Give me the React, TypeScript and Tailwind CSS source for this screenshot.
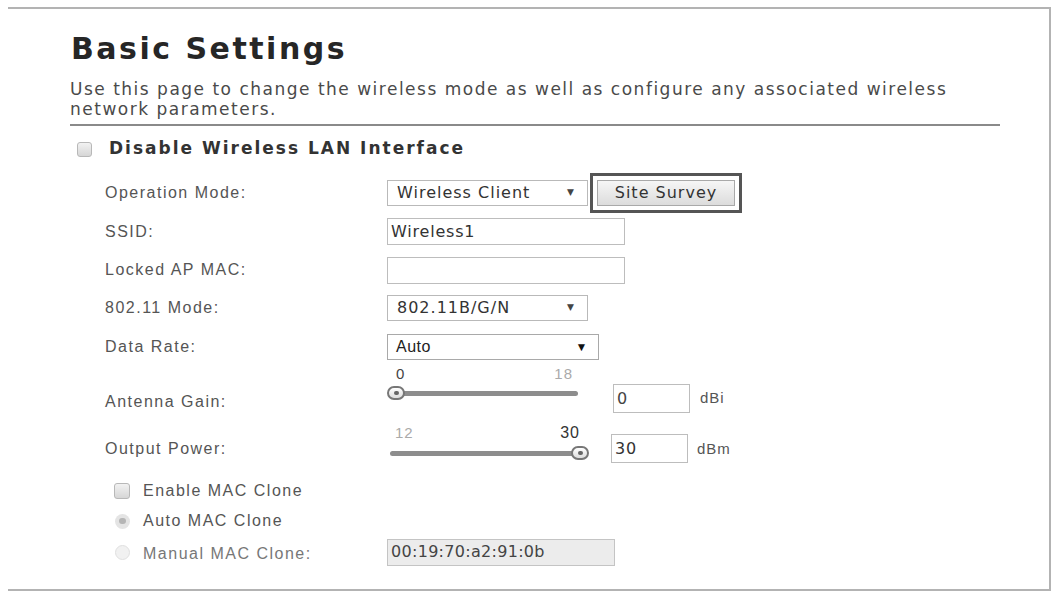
import React from 'react';

const sans = { fontFamily: '"DejaVu Sans", Verdana, sans-serif' };
const arial = { fontFamily: '"Liberation Sans", Arial, sans-serif' };

function Label({ children }: { children: React.ReactNode }) {
  return (
    <div className="w-[282px] shrink-0 text-[16px] leading-[20px] tracking-[1.5px] text-[#555]" style={arial}>
      {children}
    </div>
  );
}

function Select({ value, width }: { value: string; width: string }) {
  return (
    <div
      className={`${width} h-[26px] flex items-center justify-between border border-[#b9b9b9] bg-white pl-[9px] pr-[12px] text-[16px] tracking-[1px] text-[#333]`}
      style={sans}
    >
      <span>{value}</span>
      <span className="text-[9px] text-[#444]">▼</span>
    </div>
  );
}

function TextBox({ value = '', className = '' }: { value?: string; className?: string }) {
  return (
    <div
      className={`h-[27px] flex items-center border border-[#bdbdbd] bg-white pl-[3px] text-[16px] tracking-[0.8px] text-[#333] ${className}`}
      style={sans}
    >
      {value}
    </div>
  );
}

function Thumb() {
  return (
    <div className="w-[18px] h-[14px] rounded-full border-2 border-[#777] bg-gradient-to-b from-white to-[#ddd] flex items-center justify-center">
      <div className="w-[5px] h-[4px] rounded-full bg-[#666]" />
    </div>
  );
}

function Checkbox({ className = '' }: { className?: string }) {
  return (
    <div className={`w-[15px] h-[15px] rounded-[3px] border border-[#b8b8b8] bg-gradient-to-b from-[#f2f2f2] to-[#d6d6d6] ${className}`} />
  );
}

export default function App() {
  return (
    <div className="w-[1054px] h-[595px] bg-white overflow-hidden">
      <div className="mt-[7px] ml-[8px] w-[1043px] h-[584px] border-t-2 border-r-2 border-b-2 border-[#b3b3b3] pl-[62px] pt-[25px]">
        <h1 className="ml-[1px] text-[30px] leading-[30px] font-bold tracking-[2.5px] text-[#262626]" style={sans}>
          Basic Settings
        </h1>
        <p className="mt-[15px] text-[17px] leading-[20px] tracking-[1.5px] text-[#4a4a4a] whitespace-nowrap" style={sans}>
          Use this page to change the wireless mode as well as configure any associated wireless
          <br />
          network parameters.
        </p>
        <div className="mt-[5px] w-[930px] h-[2px] bg-[#8a8a8a]" />

        <div className="mt-[13px] ml-[7px] h-[20px] flex items-center">
          <Checkbox />
          <span className="ml-[17px] text-[17px] font-bold tracking-[2px] text-[#333]" style={sans}>
            Disable Wireless LAN Interface
          </span>
        </div>

        <div className="mt-[15px] pl-[35px]">
          <div className="h-[38px] flex items-center">
            <Label>Operation Mode:</Label>
            <Select value="Wireless Client" width="w-[201px]" />
            <div className="ml-[2px] w-[152px] h-[40px] border-[3px] border-[#555] flex items-center justify-center">
              <div
                className="w-[138px] h-[26px] border border-[#a9a9a9] bg-gradient-to-b from-[#f6f6f6] to-[#dcdcdc] flex items-center justify-center text-[16px] tracking-[1px] text-[#333]"
                style={sans}
              >
                Site Survey
              </div>
            </div>
          </div>
          <div className="h-[39px] flex items-center">
            <Label>SSID:</Label>
            <TextBox value="Wireless1" className="w-[238px]" />
          </div>
          <div className="h-[38px] flex items-center">
            <Label>Locked AP MAC:</Label>
            <TextBox className="w-[238px]" />
          </div>
          <div className="h-[38px] flex items-center">
            <Label>802.11 Mode:</Label>
            <Select value="802.11B/G/N" width="w-[201px]" />
          </div>
          <div className="h-[39px] flex items-center">
            <Label>Data Rate:</Label>
            <div
              className="w-[212px] h-[26px] flex items-center justify-between border border-[#a9a9a9] bg-white pl-[8px] pr-[10px] text-[16px] tracking-[0.5px] text-[#222]"
              style={arial}
            >
              <span>Auto</span>
              <span className="text-[12px] text-[#111]">▼</span>
            </div>
          </div>

          {/* Antenna gain */}
          <div className="h-[59px] flex items-start">
            <div className="mt-[26px]">
              <Label>Antenna Gain:</Label>
            </div>
            <div className="w-[205px]">
              <div className="h-[16px] flex justify-between pl-[9px] pr-[19px] text-[15px] leading-[16px] tracking-[1px]" style={arial}>
                <span className="text-[#444]">0</span>
                <span className="text-[#aaa]">18</span>
              </div>
              <div className="relative mt-[3px] h-[16px] w-[192px] flex items-center">
                <div className="ml-[1px] w-[190px] h-[5px] rounded-full bg-[#8d8d8d]" />
                <div className="absolute left-[0px] top-[1px]">
                  <Thumb />
                </div>
              </div>
            </div>
            <TextBox value="0" className="mt-[18px] ml-[21px] w-[77px] h-[29px] text-[#444]" />
            <span className="mt-[22px] ml-[10px] text-[15px] leading-[20px] tracking-[1px] text-[#555]" style={arial}>
              dBi
            </span>
          </div>

          {/* Output power */}
          <div className="h-[45px] flex items-start">
            <div className="mt-[14px]">
              <Label>Output Power:</Label>
            </div>
            <div className="w-[203px]">
              <div className="h-[16px] flex justify-between pl-[8px] pr-[10px] text-[15px] leading-[16px] tracking-[1px]" style={arial}>
                <span className="text-[#aaa]">12</span>
                <span className="text-[#333] text-[16px]">30</span>
              </div>
              <div className="relative mt-[4px] h-[16px] w-[202px] flex items-center">
                <div className="ml-[3px] w-[193px] h-[5px] rounded-full bg-[#8d8d8d]" />
                <div className="absolute left-[184px] top-[1px]">
                  <Thumb />
                </div>
              </div>
            </div>
            <TextBox value="30" className="mt-[9px] ml-[21px] w-[77px] h-[29px] text-[#333]" />
            <span className="mt-[14px] ml-[9px] text-[15px] leading-[20px] tracking-[1px] text-[#555]" style={arial}>
              dBm
            </span>
          </div>

          {/* MAC clone */}
          <div className="mt-[8px] h-[26px] flex items-center pl-[9px]">
            <Checkbox className="w-[16px] h-[16px]" />
            <span className="ml-[13px] text-[16px] tracking-[1.5px] text-[#555]" style={arial}>
              Enable MAC Clone
            </span>
          </div>
          <div className="mt-[4px] h-[26px] flex items-center pl-[10px]">
            <div className="w-[15px] h-[15px] rounded-full bg-[#e4e4e4] flex items-center justify-center">
              <div className="w-[7px] h-[6px] rounded-full bg-[#b5b5b5]" />
            </div>
            <span className="ml-[13px] text-[16px] tracking-[1.5px] text-[#555]" style={arial}>
              Auto MAC Clone
            </span>
          </div>
          <div className="mt-[4px] h-[28px] flex items-center">
            <div className="w-[282px] shrink-0 flex items-center pl-[10px]">
              <div className="w-[15px] h-[15px] rounded-full border border-[#e0e0e0] bg-[#f1f1f1]" />
              <span className="ml-[13px] mt-[3px] text-[16px] tracking-[1.5px] text-[#777]" style={arial}>
                Manual MAC Clone:
              </span>
            </div>
            <div
              className="w-[228px] h-[27px] flex items-center border border-[#c4c4c4] bg-[#ececec] pl-[3px] text-[16px] tracking-[0.3px] text-[#444]"
              style={sans}
            >
              00:19:70:a2:91:0b
            </div>
          </div>
        </div>
      </div>
    </div>
  );
}
